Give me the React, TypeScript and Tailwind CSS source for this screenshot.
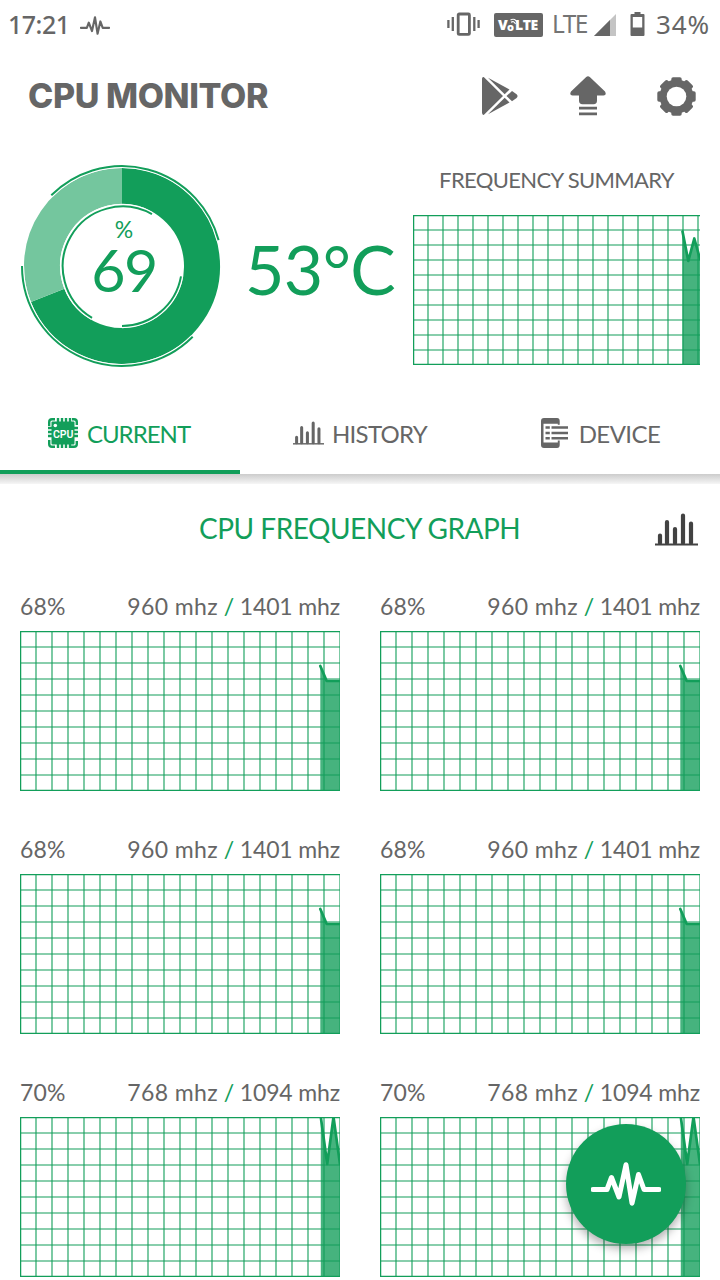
type Point = [number, number];

const GREEN = "#129e5a";

function arc(cx: number, cy: number, r: number, from: number, to: number) {
  const at = (deg: number) => {
    const a = ((deg - 90) * Math.PI) / 180;
    return `${(cx + r * Math.cos(a)).toFixed(2)} ${(cy + r * Math.sin(a)).toFixed(2)}`;
  };
  return `M${at(from)}A${r} ${r} 0 ${to - from > 180 ? 1 : 0} 1 ${at(to)}`;
}

function Pulse({ className, strokeWidth }: { className: string; strokeWidth: number }) {
  return (
    <svg viewBox="0 0 70 44" className={className} fill="none" stroke="currentColor" strokeWidth={strokeWidth} strokeLinejoin="round" strokeLinecap="round">
      <path d="M2 27.5H16L20.5 15.5L28 35L35 2.8L41 41.2L47.5 12.5L53 27.5H68" />
    </svg>
  );
}

function BarsIcon({ className }: { className: string }) {
  return (
    <svg viewBox="0 0 43 33" className={className} stroke="currentColor" strokeWidth="4.2">
      <path d="M5 30V22.5M12 30V9M20 30V16M28 30V2.5M36 30V10.5" strokeLinecap="round" />
      <path d="M0 31.5H43" strokeWidth="2" />
    </svg>
  );
}

function CpuIcon() {
  return (
    <svg viewBox="0 0 30 30" className="h-[30px] w-[30px]">
      <path
        d="M1.2 8V4Q1.2 1.2 4 1.2H7M10 0V4M14 0V4M18 0V4M22 0V4M24 1.2H26Q28.8 1.2 28.8 4V7M28.8 23V26Q28.8 28.8 26 28.8H23M7 28.8H4Q1.2 28.8 1.2 26V22M10 26V30M14 26V30M18 26V30M22 26V30M0 10H4M0 14H4M0 18H4M26 10H30M26 14H30M26 18H30"
        fill="none"
        stroke={GREEN}
        strokeWidth="2.4"
      />
      <rect x="3.5" y="3.5" width="23" height="23" rx="1" fill={GREEN} />
      <circle cx="7.3" cy="7.5" r="1.8" fill="#fff" />
      <text x="15.2" y="19.6" textAnchor="middle" fontSize="10.5" fontWeight="600" fontFamily="Roboto, sans-serif" fill="#fff" textLength="20.5" lengthAdjust="spacing">
        CPU
      </text>
    </svg>
  );
}

function DeviceIcon() {
  return (
    <svg viewBox="0 0 28 30" className="h-[30px] w-[28px]">
      <path
        d="M3 0H16Q18.7 0 18.7 3V6.8H16.8V5.7H2.5V24.5H16.8V22.5H18.7V27Q18.7 30 16 30H3Q0 30 0 27V3Q0 0 3 0Z"
        fill="#666"
      />
      <path d="M4.5 9.5H8.8M10.5 9.5H27M4.5 15H8.8M10.5 15H27M4.5 20.3H8.8M10.5 20.3H27" stroke="#666" strokeWidth="2.4" />
    </svg>
  );
}

function Graph({ width, height, cell, points, className }: { width: number; height: number; cell: number; points: Point[]; className: string }) {
  const line = points.map(([x, y]) => `${x} ${y}`).join("L");
  let grid = "";
  for (let x = cell; x <= width; x += cell) grid += `M${x} 0V${height}`;
  for (let y = cell; y < height; y += cell) grid += `M0 ${y}H${width}`;
  return (
    <svg viewBox={`0 0 ${width} ${height}`} className={className}>
      <path d={grid} stroke={GREEN} strokeWidth="1.1" />
      <path d={`M${width} 0.6H0.6V${height - 0.6}H${width}`} fill="none" stroke={GREEN} strokeWidth="1.3" />
      <path d={`M${line}V${height}H${points[0][0]}Z`} fill={GREEN} fillOpacity="0.78" />
      <path d={`M${line}`} fill="none" stroke={GREEN} strokeWidth="2.7" strokeLinecap="round" strokeLinejoin="round" />
    </svg>
  );
}

function StatusBar() {
  return (
    <div className="flex h-12 items-center pl-[8px] pr-[10px] font-['Noto_Sans',sans-serif]">
      <span className="w-[72px] text-[25px] font-medium leading-none tracking-[-0.5px]">17:21</span>
      <Pulse className="mt-[2px] h-[19px] w-[30px]" strokeWidth={5} />
      <svg viewBox="0 0 33 24" className="ml-auto h-6 w-[33px]" fill="none" stroke="#666" strokeWidth="2.3">
        <rect x="11.2" y="2" width="11.2" height="20.4" rx="1" strokeWidth="2.8" />
        <path d="M1.4 8V16M5.8 5V19M27.3 5V19M31.6 8V16" />
      </svg>
      <div className="relative ml-[14px] mt-px flex h-6 w-[49px] items-center rounded-[2px] bg-[#666] pl-[4px] font-['Open_Sans',sans-serif] text-[14px] font-extrabold leading-none text-white">
        <span className="w-[9px]">V</span>
        <span className="mt-[3px] w-[8px] text-[11px]">o</span>
        <span className="tracking-[-0.5px]">LTE</span>
        <svg viewBox="0 0 10 8" className="absolute left-[15px] top-[5px] h-2 w-[10px]" fill="none" stroke="#fff" strokeWidth="1.1">
          <path d="M1.5 2Q6 -.5 8.5 5M2 4.2Q5 2.5 6.5 6" />
        </svg>
      </div>
      <span className="ml-[9px] w-[38px] text-[24.5px] font-normal leading-none tracking-[-1.6px] opacity-90">LTE</span>
      <svg viewBox="0 0 22 22" className="ml-[4px] mt-[2px] h-[22px] w-[22px]">
        <path d="M0 22L22 0V22Z" fill="#c4c4c4" />
        <path d="M0 22L16 6V22Z" fill="#666" />
      </svg>
      <svg viewBox="0 0 15 24" className="ml-[14px] h-6 w-[15px]">
        <path d="M4.5 0H10.5V2H13.5Q14.5 2 14.5 3V23Q14.5 24 13.5 24H1.5Q.5 24 .5 23V3Q.5 2 1.5 2H4.5Z" fill="#666" />
        <path d="M2.8 5H12.2V15.5H2.8Z" fill="#fff" />
      </svg>
      <span className="ml-[11px] w-[54px] whitespace-nowrap text-[26px] font-normal leading-none tracking-[0.9px]">34%</span>
    </div>
  );
}

function Header() {
  return (
    <header className="flex h-24 items-center pl-7 pr-6">
      <h1 className="whitespace-nowrap font-['Inter',sans-serif] text-[34px] font-extrabold leading-none tracking-[-0.4px]">CPU MONITOR</h1>
      <svg viewBox="0 0 36 38" className="ml-auto h-[38px] w-9" fill="#666">
        <path d="M.8 0Q1.6 -.3 2.5 .8L21 19L2.5 37.3Q1.4 38.4 .6 37.5L0 36V1.5Z" />
        <path d="M6 .8L27.5 12.5L22.7 17.3Z" />
        <path d="M6 37.3L27.5 25.6L22.7 20.8Z" />
        <path d="M24.5 19.1L30 14L34.6 17.2Q36.5 19.1 34.6 21L30 24.2Z" />
      </svg>
      <svg viewBox="0 0 36 40" className="ml-[52px] h-10 w-9" fill="#666">
        <path d="M16.2 1Q18 -.6 19.8 1L35 15.5Q37 19 33.5 19.4H27V24.5Q27 28.3 23.5 28.3H12.5Q9 28.3 9 24.5V19.4H2.5Q-1 19 1 15.5Z" />
        <path d="M9 30.7H27V33.4H9ZM9 36.6H27V39.3H9Z" />
      </svg>
      <svg viewBox="-19.5 -19.5 39 39" className="ml-[51px] h-[39px] w-[39px]">
        <g fill="#666">
          {[0, 45, 90, 135].map((deg) => (
            <rect key={deg} x="-5.2" y="-19.2" width="10.4" height="38.4" rx="1.8" transform={`rotate(${deg})`} />
          ))}
          <circle r="17" />
        </g>
        <circle r="9.8" fill="#fff" />
      </svg>
    </header>
  );
}

function Gauge() {
  return (
    <div className="relative h-[204px] w-[204px] text-[#129e5a]">
      <svg viewBox="0 0 204 204" className="h-full w-full" fill="none">
        <path d={arc(102, 102, 80, 0, 248.4)} stroke={GREEN} strokeWidth="36" />
        <path d={arc(102, 102, 80, 248.4, 360)} stroke="#74c69e" strokeWidth="36" />
        <path d={arc(102, 102, 99.2, 315, 435) + arc(102, 102, 99.2, 135, 270)} stroke="#fff" strokeWidth="2.6" />
        <path d={arc(102, 102, 100, 315, 435) + arc(102, 102, 100, 135, 270)} stroke={GREEN} strokeWidth="2" />
        <path d={arc(102, 102, 61.5, 210, 390) + arc(102, 102, 61.5, 100, 180)} stroke="#fff" strokeWidth="1.3" />
        <path d={arc(102, 102, 59.9, 210, 390) + arc(102, 102, 59.9, 100, 180)} stroke={GREEN} strokeWidth="2" />
      </svg>
      <div className="absolute inset-0 flex flex-col items-center pl-1 pt-[54px]">
        <span className="text-[23px] leading-[23px]">%</span>
        <span className="mt-[5px] text-[59px] leading-[48px] tracking-[-1.5px]">69</span>
      </div>
    </div>
  );
}

function Summary() {
  return (
    <section className="flex h-[252px] pl-5">
      <div className="pt-5">
        <Gauge />
      </div>
      <div className="w-[189px] whitespace-nowrap pl-[21px] pt-[91px] text-[68px] leading-none tracking-[-0.6px] text-[#129e5a]">53°C</div>
      <div className="flex w-[287px] flex-col items-center pt-[25px]">
        <h2 className="h-[46px] whitespace-nowrap text-[22px] leading-[22px] tracking-[-0.65px]">FREQUENCY SUMMARY</h2>
        <Graph
          width={287}
          height={150}
          cell={15}
          points={[[269.5, 16.5], [275.3, 46], [281.3, 23.5], [287, 44]]}
          className="h-[150px] w-[287px]"
        />
      </div>
    </section>
  );
}

function Tabs() {
  return (
    <nav className="grid h-[78px] grid-cols-3 text-[24px] leading-none">
      <div className="flex items-center justify-center gap-[9px] border-b-4 border-[#129e5a] pr-[2px] text-[#129e5a]">
        <CpuIcon />
        <span className="mt-[2px] tracking-[-1px]">CURRENT</span>
      </div>
      <div className="flex items-center justify-center gap-[8px] border-b-4 border-transparent">
        <BarsIcon className="h-[24px] w-[31px]" />
        <span className="mt-[2px] tracking-[-0.7px]">HISTORY</span>
      </div>
      <div className="flex items-center justify-center gap-[10px] border-b-4 border-transparent pl-px">
        <DeviceIcon />
        <span className="mt-[2px] tracking-[-0.55px]">DEVICE</span>
      </div>
    </nav>
  );
}

const slow: Point[] = [[300.3, 35], [306.7, 50], [320, 50]];
const busy: Point[] = [[300.8, 0], [307.2, 47], [313.5, 0], [320, 47]];

const cores = [
  { load: "68%", now: "960 mhz", max: "1401 mhz", points: slow },
  { load: "68%", now: "960 mhz", max: "1401 mhz", points: slow },
  { load: "68%", now: "960 mhz", max: "1401 mhz", points: slow },
  { load: "68%", now: "960 mhz", max: "1401 mhz", points: slow },
  { load: "70%", now: "768 mhz", max: "1094 mhz", points: busy },
  { load: "70%", now: "768 mhz", max: "1094 mhz", points: busy },
];

export default function App() {
  return (
    <div className="relative h-[1280px] w-[720px] overflow-hidden bg-white font-['Lato',sans-serif] text-[#666]">
      <StatusBar />
      <Header />
      <Summary />
      <Tabs />
      <div className="h-[10px] bg-linear-to-b from-[#cccccc] to-[#f6f6f6]" />
      <div className="flex h-[90px] items-center pl-[199px] pr-[22px]">
        <h2 className="-mt-[2px] whitespace-nowrap text-[28px] leading-none tracking-[-0.48px] text-[#129e5a]">CPU FREQUENCY GRAPH</h2>
        <BarsIcon className="ml-auto h-[33px] w-[43px] text-[#424242]" />
      </div>
      <main className="grid grid-cols-2 gap-x-10 gap-y-[26px] px-5">
        {cores.map((core, i) => (
          <section key={i}>
            <div className="flex h-[57px] items-center justify-between whitespace-nowrap pt-[7px] text-[23px] leading-none">
              <span className="tracking-[0.2px]">{core.load}</span>
              <span className="tracking-[-0.15px]">
                <span className="tracking-[0.4px]">{core.now}</span> <span className="text-[#129e5a]">/</span> {core.max}
              </span>
            </div>
            <Graph width={320} height={160} cell={16} points={core.points} className="block h-[160px] w-[320px]" />
          </section>
        ))}
      </main>
      <button className="absolute left-[566px] top-[1124px] flex h-[120px] w-[120px] items-center justify-center rounded-full bg-[#129e5a] text-white shadow-[0_5px_10px_rgba(0,0,0,0.3)]">
        <Pulse className="h-11 w-[70px]" strokeWidth={5} />
      </button>
    </div>
  );
}
